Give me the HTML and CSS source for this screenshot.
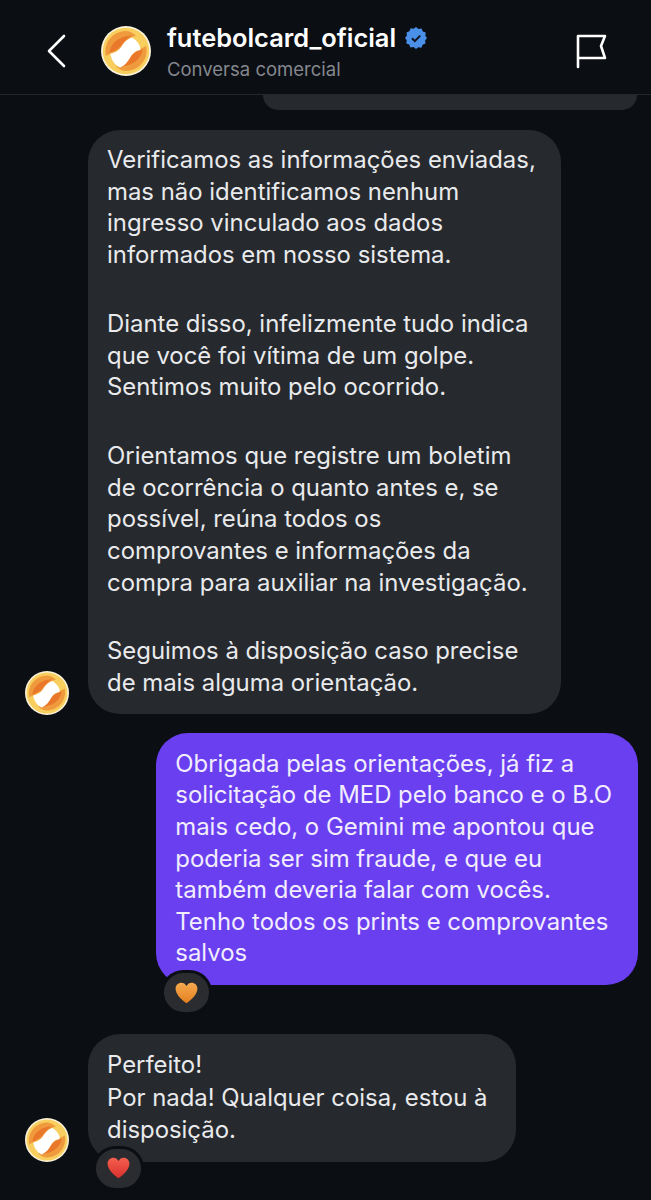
FILE: index.html
```html
<!DOCTYPE html>
<html lang="pt-BR">
<head>
<meta charset="utf-8">
<title>futebolcard_oficial</title>
<link rel="stylesheet" href="styles.css">
</head>
<body>
<svg class="defs" width="0" height="0" aria-hidden="true">
  <defs>
    <linearGradient id="grad-orange" x1="0" y1="0" x2="0" y2="1">
      <stop offset="0" stop-color="#f7a94f"/>
      <stop offset="1" stop-color="#e2801f"/>
    </linearGradient>
    <linearGradient id="grad-red" x1="0" y1="0" x2="0" y2="1">
      <stop offset="0" stop-color="#f4604f"/>
      <stop offset="1" stop-color="#d92f2c"/>
    </linearGradient>
    <symbol id="logo" viewBox="0 0 100 100">
      <circle cx="50" cy="50" r="50" fill="#fbf3dc"/>
      <circle cx="50" cy="50" r="46.5" fill="#f8cf5e"/>
      <path d="M10 60C4 36 22 11 49 10 58 10 65 14 70 20 56 22 49 33 43 41 36 50 22 52 10 60z" fill="#f09a3e"/>
      <path d="M17 54C18 36 34 20 62 19 52 24 46 32 41 38 34 47 25 50 17 54z" fill="#e9782a"/>
      <path d="M90 40C96 64 78 89 51 90 42 90 35 86 30 80 44 78 51 67 57 59 64 50 78 48 90 40z" fill="#f09a3e"/>
      <path d="M83 46C82 64 66 80 38 81 48 76 54 68 59 62 66 53 75 50 83 46z" fill="#e9782a"/>
      <path d="M19 55C30 54 36 48 41 41 46 33 52 26 62 23 72 29 79 38 79 48 69 49 63 55 59 62 54 71 48 79 38 83 27 78 20 67 19 55z" fill="#fff"/>
    </symbol>
  </defs>
</svg>
<div class="screen">
  <header class="topbar">
    <svg class="back" width="20" height="34" viewBox="0 0 20 34" aria-label="Voltar"><path d="M18 2 3 17l15 15" fill="none" stroke="#fff" stroke-width="2.6" stroke-linecap="round" stroke-linejoin="round"/></svg>
    <svg class="head-avatar" width="50" height="50"><use href="#logo"/></svg>
    <div class="identity">
      <div class="name-row">
        <span class="name">futebolcard_oficial</span>
        <svg class="badge" width="22" height="22" viewBox="0 0 22 22" aria-label="Verificado"><path d="M11 0l2.5 1.9 3.1-.4 1.2 2.9 2.9 1.2-.4 3.1L22 11l-1.9 2.5.4 3.1-2.9 1.2-1.2 2.9-3.1-.4L11 22l-2.5-1.9-3.1.4-1.2-2.9-2.9-1.2.4-3.1L0 11l1.9-2.5-.4-3.1 2.9-1.2 1.2-2.9 3.1.4z" fill="#4a90e8"/><path d="M7 11.3l2.8 2.8L15.2 8.6" fill="none" stroke="#10141c" stroke-width="2"/></svg>
      </div>
      <div class="subtitle">Conversa comercial</div>
    </div>
    <svg class="flag" width="32" height="36" viewBox="0 0 32 36" aria-label="Denunciar"><path d="M3 34V3h27l-4 10 4 12H3" fill="none" stroke="#fff" stroke-width="2.6" stroke-linecap="round" stroke-linejoin="round"/></svg>
  </header>

  <main class="thread">
    <div class="stub"></div>

    <div class="row incoming first">
      <svg class="avatar" width="44" height="44"><use href="#logo"/></svg>
      <div class="bubble in">
        <p>Verificamos as informações enviadas,<br>mas não identificamos nenhum<br>ingresso vinculado aos dados<br>informados em nosso sistema.</p>
        <p>Diante disso, infelizmente tudo indica<br>que você foi vítima de um golpe.<br>Sentimos muito pelo ocorrido.</p>
        <p>Orientamos que registre um boletim<br>de ocorrência o quanto antes e, se<br>possível, reúna todos os<br>comprovantes e informações da<br>compra para auxiliar na investigação.</p>
        <p>Seguimos à disposição caso precise<br>de mais alguma orientação.</p>
      </div>
    </div>

    <div class="row outgoing">
      <div class="bubble out">
        <p>Obrigada pelas orientações, já fiz a<br>solicitação de MED pelo banco e o B.O<br>mais cedo, o Gemini me apontou que<br>poderia ser sim fraude, e que eu<br>também deveria falar com vocês.<br>Tenho todos os prints e comprovantes<br>salvos</p>
        <div class="reaction react-out"><svg width="23" height="22" viewBox="0 0 40 38"><path d="M20 37C10 29 1 21 1 11 1 5 6 1 11 1c4 0 7 2 9 6 2-4 5-6 9-6 5 0 10 4 10 10 0 10-9 18-19 26z" fill="url(#grad-orange)"/></svg></div>
      </div>
    </div>

    <div class="row incoming last">
      <svg class="avatar" width="44" height="44"><use href="#logo"/></svg>
      <div class="bubble in tail">
        <p>Perfeito!<br>Por nada! Qualquer coisa, estou à<br>disposição.</p>
        <div class="reaction react-in"><svg width="23" height="22" viewBox="0 0 40 38"><path d="M20 37C10 29 1 21 1 11 1 5 6 1 11 1c4 0 7 2 9 6 2-4 5-6 9-6 5 0 10 4 10 10 0 10-9 18-19 26z" fill="url(#grad-red)"/></svg></div>
      </div>
    </div>
  </main>
</div>
</body>
</html>
```
FILE: styles.css
```css
* { box-sizing: border-box; }
html, body { margin: 0; padding: 0; background: #0b0e13; }
body { font-family: Inter, "Liberation Sans", sans-serif; color: #e9eaec; overflow: hidden; }
.defs { position: absolute; }
.screen { width: 651px; height: 1200px; overflow: hidden; }

.topbar {
  height: 95px;
  display: flex;
  align-items: flex-start;
  border-bottom: 1px solid #24272c;
  padding: 26px 0 0 46px;
}
.back { margin-top: 8px; flex: none; }
.head-avatar { margin-left: 35px; flex: none; }
.identity { margin-left: 16px; flex: 1; }
.name-row { display: flex; align-items: center; height: 24px; }
.name { font-size: 25.4px; font-weight: 600; color: #fff; line-height: 24px; }
.badge { margin-left: 9px; }
.subtitle { margin-top: 8px; font-size: 18.5px; line-height: 22px; color: #85888e; }
.flag { margin: 7px 44px 0 0; flex: none; }

.thread { display: flex; flex-direction: column; }
.stub {
  align-self: flex-end;
  width: 374px;
  height: 15px;
  margin-right: 14px;
  background: #26292e;
  border-radius: 0 0 20px 20px;
}
.row { display: flex; align-items: flex-end; }
.incoming { padding-left: 25px; }
.outgoing { justify-content: flex-end; padding-right: 13px; margin-top: 19px; }
.first { margin-top: 20px; }
.last { margin-top: 49px; }
.avatar { flex: none; margin-right: 19px; }
.first .avatar { margin-bottom: -1px; }
.bubble { position: relative; font-size: 23.9px; line-height: 31.7px; padding: 14px 25px 15px 19px; border-radius: 32px; }
.bubble p { margin: 0 0 37px; }
.bubble p:last-of-type { margin-bottom: 0; }
.in { background: #26292e; }
.out { background: #6a3ff0; color: #f1edfd; padding: 15px 26px 16px 19px; line-height: 31.6px; }
.tail { padding: 15px 29px 15px 19px; line-height: 32.6px; }

.reaction {
  position: absolute;
  width: 51px;
  height: 45px;
  border-radius: 23px;
  background: #2a2c30;
  border: 3px solid #0b0e13;
  display: flex;
  align-items: center;
  justify-content: center;
}
.react-out { left: 5px; bottom: -30px; }
.react-in { left: 5px; bottom: -29px; }
```
